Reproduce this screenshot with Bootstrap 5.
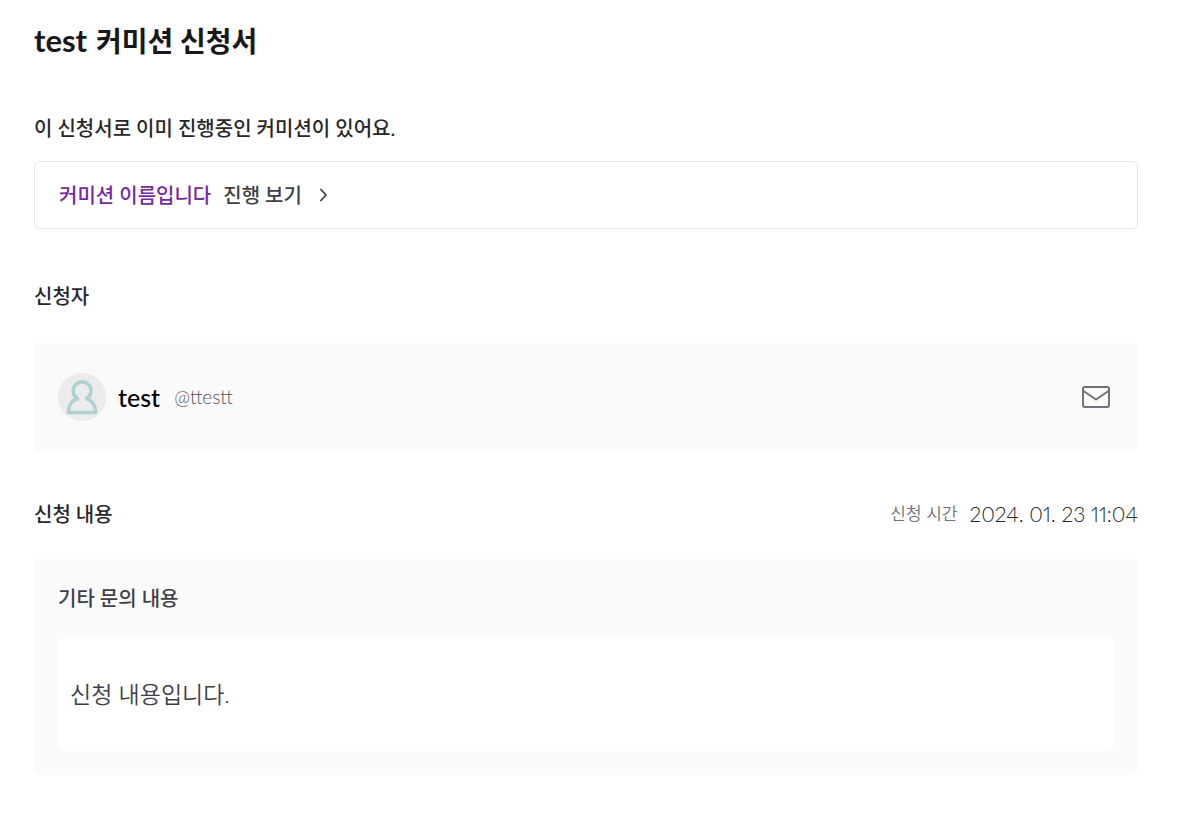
<!DOCTYPE html>
<html lang="ko">
<head>
<meta charset="utf-8">
<meta name="viewport" content="width=device-width, initial-scale=1">
<title>test 커미션 신청서</title>
<link href="https://cdn.jsdelivr.net/npm/bootstrap@5.3.0/dist/css/bootstrap.min.css" rel="stylesheet">
<style>
body { font-family: Lato, "Noto Sans CJK KR", sans-serif; color: #222; background: #fff; }
.page { padding: 22px 39px 51px 34px; }
h1, h2, h3 { font-weight: 500; margin: 0; }
h1 { font-size: 28px; line-height: 39px; color: #18181b; font-weight: 700; }
h1 span { font-size: 31px; line-height: 1; margin-right: 2px; }
h2, h3, .progress-link { font-size: 20px; line-height: 32px; }
h2 { color: #27272a; }
h3, .progress-link { color: #3f3f46; }
.progress-link { font-weight: 500; margin-top: 17px; padding: 17px 24px; border: 1px solid #e4e4e7; border-radius: 6px; gap: 12px; }
.progress-link .title { color: #7429a5; }
.panel { background: #fafafa; border-radius: 6px; padding: 23px 24px 24px; margin-top: 29px; }
.block { margin-top: 51px; }
.detail { margin-top: 47px; }
.profile { padding: 30px 24px; margin-top: 31px; }
.user { font-size: 25px; line-height: 32px; color: #000; font-weight: 500; margin-left: 12px; }
.handle { font-size: 19px; line-height: 32px; font-weight: 300; color: #52525b; margin-left: 14px; }
.applied { gap: 12px; }
.time-label { font-size: 17px; line-height: 32px; font-weight: 350; color: #71717a; }
.time { font-size: 21px; line-height: 32px; font-weight: 300; color: #27272a; font-variant-numeric: proportional-nums; }
.answer { background: #fff; border-radius: 8px; margin: 23px 0 0; padding: 41px 12px; font-size: 23px; line-height: 32px; font-weight: 350; color: #3f3f46; }
</style>
</head>
<body>
<main class="page">
  <h1><span>test</span> 커미션 신청서</h1>

  <section class="block">
    <h2>이 신청서로 이미 진행중인 커미션이 있어요.</h2>
    <a href="#" class="progress-link d-flex align-items-center text-decoration-none">
      <span class="title">커미션 이름입니다</span>
      <span>진행 보기</span>
      <svg class="ms-1" width="12" height="16" viewBox="0 0 12 16" fill="none" stroke="#3f3f46" stroke-width="1.8" stroke-linecap="round" stroke-linejoin="round" aria-hidden="true"><path d="M3 2.500l5 5.500-5 5.500"/></svg>
    </a>
  </section>

  <section class="block">
    <h2>신청자</h2>
    <div class="panel profile d-flex align-items-center">
      <svg width="48" height="48" viewBox="0 0 48 48" role="img" aria-label="프로필">
        <circle cx="24" cy="24" r="23.7" fill="#ececec" stroke="#e6e6e6" stroke-width=".6"/>
        <path d="M10.500 39.500C10.500 32.500 13.500 27.500 19.500 25.500C16.700 23.700 15.200 21 15.200 17.800A8.900 8.900 0 0 1 33 17.800C33 21 31.300 23.700 28.500 25.500C34.500 27.500 37.500 32.500 37.500 39.500Z" fill="none" stroke="#aed2d2" stroke-width="3.6" stroke-linejoin="round"/>
      </svg>
      <span class="user">test</span>
      <span class="handle">@ttestt</span>
      <button type="button" class="btn p-0 border-0 ms-auto d-flex" aria-label="메시지 보내기">
        <svg width="36" height="36" viewBox="0 0 36 36" fill="none" stroke="#71717a" stroke-width="2" stroke-linejoin="round"><rect x="5" y="8" width="26" height="20" rx="2"/><path d="M5.500 12l12.500 8.500 12.500-8.500"/></svg>
      </button>
    </div>
  </section>

  <section class="detail">
    <div class="d-flex justify-content-between align-items-center">
      <h2>신청 내용</h2>
      <div class="applied d-flex align-items-center">
        <span class="time-label">신청 시간</span>
        <time class="time" datetime="2024-01-23T11:04">2024. 01. 23 11:04</time>
      </div>
    </div>
    <div class="panel">
      <h3>기타 문의 내용</h3>
      <p class="answer">신청 내용입니다.</p>
    </div>
  </section>
</main>
<script src="https://cdn.jsdelivr.net/npm/bootstrap@5.3.0/dist/js/bootstrap.bundle.min.js"></script>
</body>
</html>
